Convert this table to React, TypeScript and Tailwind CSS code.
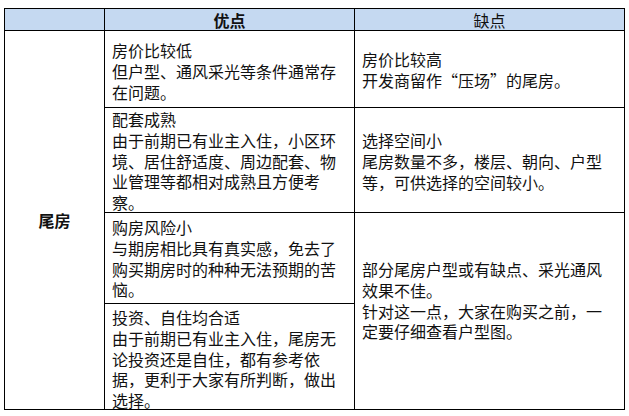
import React from "react";

const Lines = ({ lines }: { lines: React.ReactNode[] }) => (
  <>
    {lines.map((l, i) => (
      <div key={i} className="whitespace-nowrap">
        {l}
      </div>
    ))}
  </>
);

const Q = ({ c }: { c: string }) => (
  <span className="[font-feature-settings:'fwid']">{c}</span>
);

export default function App() {
  const cell = "border-r border-b border-black";
  const txt = "pl-[7px] leading-[20.75px]";
  return (
    <div
      className="w-[629px] h-[416px] bg-white text-[#111] text-[16px] overflow-hidden"
      style={{ fontFamily: '"Noto Sans CJK SC", "Noto Sans", sans-serif' }}
      lang="zh-CN"
    >
      <div className="ml-[4px] mt-[8px] w-[621px] border-l border-t border-black grid grid-cols-[100px_250px_270px] grid-rows-[22px_77px_105px_91px_106px]">
        {/* header */}
        <div className={`${cell} bg-[#c5d9f1]`} />
        <div className={`${cell} bg-[#c5d9f1] flex items-center justify-center font-bold leading-none`}>
          优点
        </div>
        <div className={`${cell} bg-[#c5d9f1] flex items-center justify-center leading-none`}>
          缺点
        </div>

        {/* row label */}
        <div className={`${cell} row-span-4 flex items-center justify-center font-bold`}>
          尾房
        </div>

        {/* row 1 */}
        <div className={`${cell} ${txt} pt-[9px]`}>
          <Lines lines={["房价比较低", "但户型、通风采光等条件通常存", "在问题。"]} />
        </div>
        <div className={`${cell} ${txt} pt-[18px]`}>
          <Lines
            lines={[
              "房价比较高",
              <>
                开发商留作<Q c="“" />压场<Q c="”" />的尾房。
              </>,
            ]}
          />
        </div>

        {/* row 2 */}
        <div className={`${cell} ${txt} pt-[1px]`}>
          <Lines
            lines={[
              "配套成熟",
              "由于前期已有业主入住，小区环",
              "境、居住舒适度、周边配套、物",
              "业管理等都相对成熟且方便考",
              "察。",
            ]}
          />
        </div>
        <div className={`${cell} ${txt} pt-[22px]`}>
          <Lines
            lines={["选择空间小", "尾房数量不多，楼层、朝向、户型", "等，可供选择的空间较小。"]}
          />
        </div>

        {/* row 3 */}
        <div className={`${cell} ${txt} pt-[4px]`}>
          <Lines
            lines={[
              "购房风险小",
              "与期房相比具有真实感，免去了",
              "购买期房时的种种无法预期的苦",
              "恼。",
            ]}
          />
        </div>
        <div className={`${cell} ${txt} pt-[46px] row-span-2`}>
          <Lines
            lines={[
              "部分尾房户型或有缺点、采光通风",
              "效果不佳。",
              "针对这一点，大家在购买之前，一",
              "定要仔细查看户型图。",
            ]}
          />
        </div>

        {/* row 4 */}
        <div className={`${cell} ${txt} pt-[3px]`}>
          <Lines
            lines={[
              "投资、自住均合适",
              "由于前期已有业主入住，尾房无",
              "论投资还是自住，都有参考依",
              "据，更利于大家有所判断，做出",
              "选择。",
            ]}
          />
        </div>
      </div>
    </div>
  );
}
